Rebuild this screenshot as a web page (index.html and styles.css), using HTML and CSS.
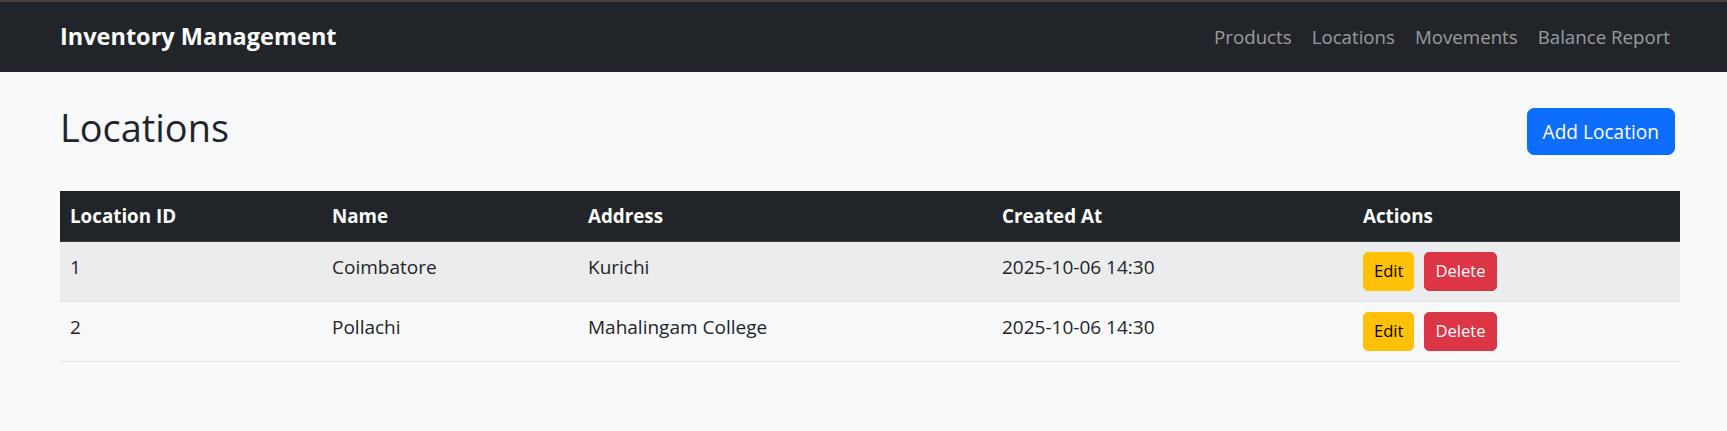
FILE: index.html
```html
<!DOCTYPE html>
<html lang="en">
<head>
<meta charset="utf-8">
<title>Locations - Inventory Management</title>
<link rel="stylesheet" href="styles.css">
</head>
<body>
<div class="window-edge"></div>
<nav class="navbar">
  <a class="brand" href="#">Inventory Management</a>
  <ul class="nav">
    <li><a class="nav-link" href="#">Products</a></li>
    <li><a class="nav-link" href="#">Locations</a></li>
    <li><a class="nav-link" href="#">Movements</a></li>
    <li><a class="nav-link" href="#">Balance Report</a></li>
  </ul>
</nav>
<main class="container">
  <div class="page-header">
    <h2 class="title">Locations</h2>
    <a class="btn btn-primary" href="#">Add Location</a>
  </div>
  <table class="table">
    <colgroup>
      <col class="col-id"><col class="col-name"><col class="col-address"><col class="col-created"><col class="col-actions">
    </colgroup>
    <thead>
      <tr><th>Location ID</th><th>Name</th><th>Address</th><th>Created At</th><th>Actions</th></tr>
    </thead>
    <tbody>
      <tr class="striped">
        <td>1</td><td>Coimbatore</td><td>Kurichi</td><td>2025-10-06 14:30</td>
        <td><div class="actions"><a class="btn-sm btn-warning" href="#">Edit</a><a class="btn-sm btn-danger" href="#">Delete</a></div></td>
      </tr>
      <tr>
        <td>2</td><td>Pollachi</td><td>Mahalingam College</td><td>2025-10-06 14:30</td>
        <td><div class="actions"><a class="btn-sm btn-warning" href="#">Edit</a><a class="btn-sm btn-danger" href="#">Delete</a></div></td>
      </tr>
    </tbody>
  </table>
</main>
</body>
</html>
```
FILE: styles.css
```css
* { box-sizing: border-box; }
html, body { margin: 0; padding: 0; }
body {
  font-family: "Open Sans", "Noto Sans", sans-serif;
  font-size: 19px;
  line-height: 30px;
  color: #212529;
  background: #f8f9fa;
}
a { text-decoration: none; }

.window-edge { height: 2px; background: #4b3f3c; }

.navbar {
  display: flex;
  align-items: center;
  justify-content: space-between;
  height: 70px;
  padding: 0 47px 0 60px;
  background: #212529;
}
.brand {
  color: #fff;
  font-weight: 700;
  font-size: 23.5px;
  line-height: 37.5px;
  padding: 6px 0 7px;
}
.nav {
  display: flex;
  list-style: none;
  margin: 0;
  padding: 0;
}
.nav-link {
  display: block;
  padding: 10px;
  font-size: 18.7px;
  line-height: 30px;
  color: rgba(255, 255, 255, 0.55);
}

.container {
  padding: 30px 47px 0 60px;
}
.page-header {
  display: flex;
  align-items: center;
  justify-content: space-between;
  padding-right: 5px;
  margin-bottom: 30px;
}
.title {
  margin: 0 0 10px;
  font-size: 37.9px;
  line-height: 48px;
  font-weight: 400;
  padding-top: 1px;
}
.btn {
  display: inline-block;
  padding: 7.5px 15px;
  border: 1px solid transparent;
  border-radius: 7px;
  font-size: 19.1px;
  line-height: 30px;
}
.btn-primary { background: #0d6efd; border-color: #0d6efd; color: #fff; }

.table {
  width: 1620px;
  border-collapse: collapse;
  table-layout: fixed;
}
.col-id { width: 262px; }
.col-name { width: 256px; }
.col-address { width: 414px; }
.col-created { width: 361px; }
.col-actions { width: 327px; }

.table th, .table td {
  padding: 10px;
  text-align: left;
  vertical-align: top;
  border-bottom: 1px solid #dee2e6;
}
.table th {
  background: #212529;
  color: #fff;
  font-weight: 700;
  font-size: 18.8px;
  border-bottom-color: #373b3e;
}
.table td { font-size: 19px; height: 59px; }
.table tr.striped td { background: #ebeced; }

.actions { display: flex; gap: 10px; }
.btn-sm {
  display: inline-block;
  padding: 5px 10px;
  border: 1px solid transparent;
  border-radius: 5px;
  font-size: 16.6px;
  line-height: 26.75px;
}
.btn-warning { background: #ffc107; border-color: #ffc107; color: #000; }
.btn-danger { background: #dc3545; border-color: #dc3545; color: #fff; }
```
